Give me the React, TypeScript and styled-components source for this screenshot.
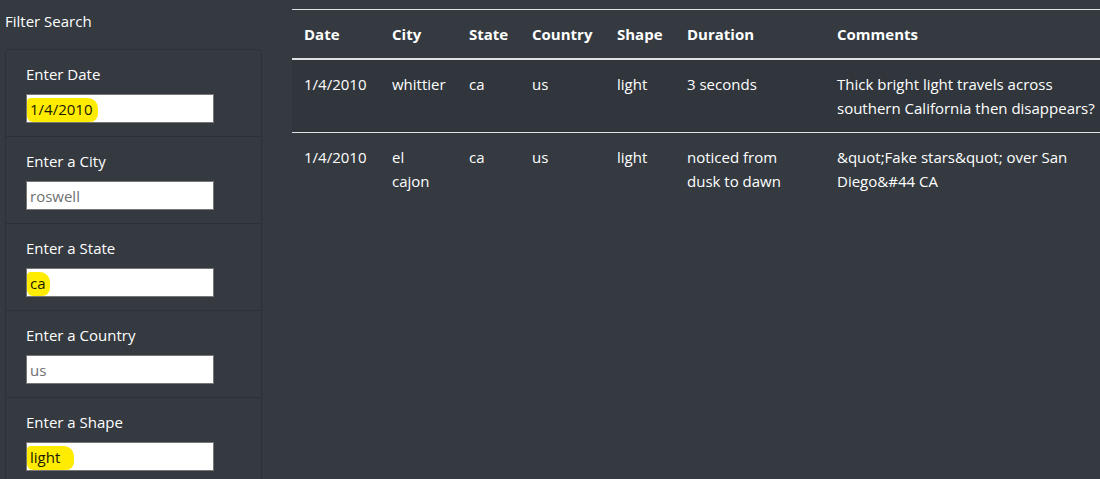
import React from "react";
import styled, { createGlobalStyle } from "styled-components";

const FONT = `"Open Sans", "Noto Sans", sans-serif`;

const Global = createGlobalStyle`
  html, body {
    margin: 0;
    padding: 0;
    background: #343a40;
    overflow: hidden;
  }
  body {
    font-family: ${FONT};
    font-size: 15px;
    line-height: 24px;
    color: #fff;
  }
`;

const Page = styled.div`
  display: flex;
  align-items: flex-start;
  padding: 9px 0 0 5px;
  gap: 30px;
`;

const Sidebar = styled.aside`
  width: 257px;
  flex: none;
`;

const Title = styled.div`
  height: 24px;
  margin-bottom: 16px;
`;

const List = styled.ul`
  list-style: none;
  margin: 0;
  padding: 0;
  border: 1px solid rgba(0, 0, 0, 0.14);
  border-radius: 4px;
`;

const Item = styled.li`
  padding: 12px 20px 13px;
  & + & {
    border-top: 1px solid rgba(0, 0, 0, 0.14);
  }
`;

const Label = styled.label`
  display: block;
  height: 24px;
  margin-bottom: 8px;
`;

const Field = styled.div`
  position: relative;
  width: 188px;
  height: 29px;
  box-sizing: border-box;
  background: #fff;
  border: 1px solid #767676;
`;

const Marker = styled.span<{ $w: number }>`
  position: absolute;
  left: 0;
  top: 3px;
  bottom: 0;
  width: ${(p) => p.$w}px;
  background: #ffec00;
  border-radius: 4px 10px 8px 6px;
`;

const Input = styled.input`
  position: relative;
  box-sizing: border-box;
  width: 100%;
  height: 100%;
  border: none;
  outline: none;
  background: transparent;
  padding: 1px 3px 0;
  font-family: ${FONT};
  font-size: 15px;
  color: #1a1a00;
  &::placeholder {
    color: #707070;
  }
`;

const Main = styled.main`
  flex: 1;
  min-width: 0;
  overflow: hidden;
`;

const Table = styled.table`
  border-collapse: collapse;
  table-layout: fixed;
  width: 818px;
  border-top: 1px solid #dee2e6;
`;

const Th = styled.th`
  text-align: left;
  font-weight: 700;
  padding: 12px;
  height: 24px;
  border-bottom: 2px solid #dee2e6;
  vertical-align: top;
`;

const Tr = styled.tr<{ $odd?: boolean }>`
  background: ${(p) => (p.$odd ? "#31363c" : "transparent")};
`;

const Td = styled.td`
  padding: 12px;
  vertical-align: top;
  border-top: 1px solid #dee2e6;
`;

const filters = [
  { label: "Enter Date", value: "1/4/2010", mark: 71 },
  { label: "Enter a City", placeholder: "roswell" },
  { label: "Enter a State", value: "ca", mark: 23 },
  { label: "Enter a Country", placeholder: "us" },
  { label: "Enter a Shape", value: "light", mark: 47 },
];

const cols = [88, 77, 63, 85, 70, 150, 285];
const heads = ["Date", "City", "State", "Country", "Shape", "Duration", "Comments"];

const rows = [
  ["1/4/2010", "whittier", "ca", "us", "light", "3 seconds", "Thick bright light travels across southern California then disappears?"],
  ["1/4/2010", "el cajon", "ca", "us", "light", "noticed from dusk to dawn", "&quot;Fake stars&quot; over San Diego&#44 CA"],
];

export default function App() {
  return (
    <>
      <Global />
      <Page>
        <Sidebar>
          <Title>Filter Search</Title>
          <List>
            {filters.map((f) => (
              <Item key={f.label}>
                <Label>{f.label}</Label>
                <Field>
                  {f.mark ? <Marker $w={f.mark} /> : null}
                  <Input
                    type="text"
                    defaultValue={f.value}
                    placeholder={f.placeholder}
                  />
                </Field>
              </Item>
            ))}
          </List>
        </Sidebar>
        <Main>
          <Table>
            <colgroup>
              {cols.map((w, i) => (
                <col key={i} style={{ width: w }} />
              ))}
            </colgroup>
            <thead>
              <tr>
                {heads.map((h) => (
                  <Th key={h}>{h}</Th>
                ))}
              </tr>
            </thead>
            <tbody>
              {rows.map((r, i) => (
                <Tr key={i} $odd={i === 0}>
                  {r.map((c, j) => (
                    <Td key={j}>{c}</Td>
                  ))}
                </Tr>
              ))}
            </tbody>
          </Table>
        </Main>
      </Page>
    </>
  );
}
